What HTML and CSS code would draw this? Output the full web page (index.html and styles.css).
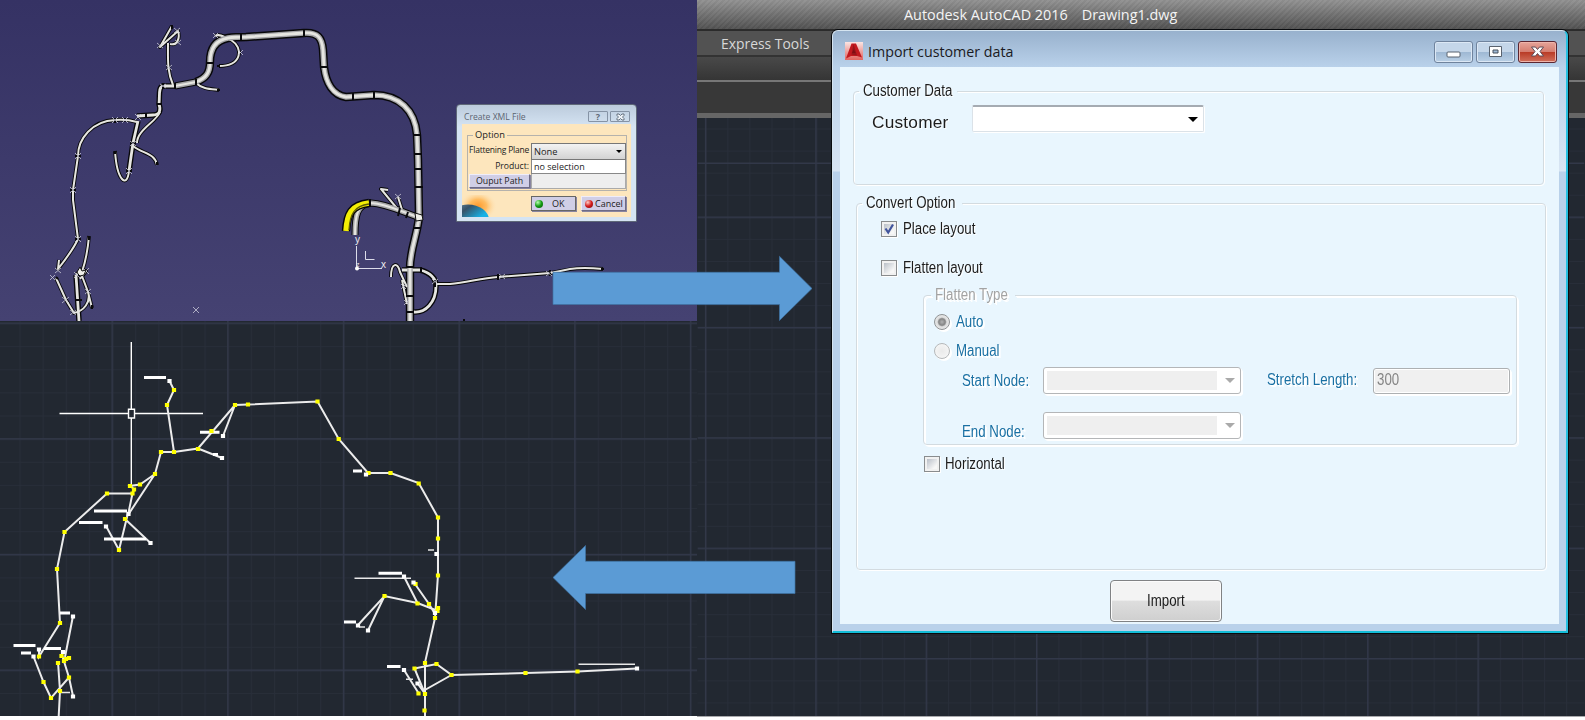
FILE: index.html
```
<!DOCTYPE html>
<html lang="en">
<head>
<meta charset="utf-8">
<title>Import customer data</title>
<link rel="stylesheet" href="styles.css">
</head>
<body>
<div class="stage">
  <div class="left">
    <section class="catia">
      <svg class="scene" width="697" height="321" viewBox="0 0 697 321">
        <defs>
          <g id="thick">
            <path d="M196 82C206 78 210 73 210 62C210 47 217 40 228 38C235 37 240 37 246 37L304 33C318 32 322 38 323 50L324 67C326 83 333 95 346 97L374 95C399 95 415 110 417 135L418 160L419 217C417 236 410 250 410 268L410 324"/>
          </g>
          <g id="medium">
            <path d="M175 86L196 82M418 217C404 213 388 204 371 203C357 204 355 216 355 235"/>
          </g>
          <g id="thin">
            <path d="M175 86L163 86C158 87 160 96 159 104C161 110 160 115 153 115L137 116M138 121L133 143L129 171"/>
            <path d="M76 275L79 321M402 270L420 270C431 273 436 279 436 286C436 303 425 313 414 312"/>
          </g>
          <g id="fine">
            <path d="M173 85C167 71 168 60 168 43M172 26L160 47L178 31C180 37 178 46 170 44M215 36C220 33 226 38 231 40C244 48 242 66 219 66M196 83C202 89 211 89 219 90"/>
            <path d="M137 122C130 120 124 119 115 120C92 121 78 139 78 156L73 190L73 200L78 239C73 250 65 260 58 269L59 260"/>
            <path d="M129 171C127 189 117 181 115 151M133 146C143 154 155 153 157 165M160 112C156 122 137 130 137 143"/>
            <path d="M56 278L66 300L74 313C84 311 91 302 88 292L82 276M89 236C88 248 86 260 82 272M88 292L92 308M76 275L80 271L86 271L80 279"/>
            <path d="M400 212L381 189L388 190M403 213L398 197M391 277C391 262 398 262 400 272L407 287M402 280L407 304M435 284L450 284C467 283 480 278 498 277L550 273C566 271 570 266 603 269"/>
          </g>
        </defs>
        <use href="#fine" class="ink w4"/><use href="#thin" class="ink w6"/><use href="#medium" class="ink w7"/><use href="#thick" class="ink w9"/>
        <use href="#fine" class="pale w2"/><use href="#thin" class="pale w3"/><use href="#medium" class="metal w5"/><use href="#thick" class="metal w6"/>
        <use href="#medium" class="pale w2"/><use href="#thick" class="pale w3"/>
        <path class="ink w9" d="M369 203C351 205 347 214 346 231"/>
        <path class="yellow" d="M369 203C351 205 347 214 346 231"/>
        <path class="yellow-shade" d="M369 204C354 206 350 214 349 230"/>
        <path class="joint" d="M241 34V41M304 30V37M320 67H328M206 63H213M353 93V100M374 92V99M413 135H421M414 154H422M414 169H422M415 187H423M415 217H423M413 228H421M406 267H414M406 296H414M406 312H414M370 199V207M400 208L398 216M408 212L406 218M175 83V89M163 83V89M196 79V85M75 156H81M70 190H76M75 239H81M157 104H162M130 143H136M126 171H132M76 300H82M146 113V118M115 118V123M498 274V280M550 270V276M421 267V273M435 280V287M220 66H217M217 90H220M157 162V165M115 151V154M89 236V240M92 305V309M56 277L58 279M601 269H604M172 25V29M464 319V321"/>
        <path class="cross" d="M193 307l6 6m0-6l-6 6M50 275l5 5m0-5l-5 5M157 43l6 5m0-5l-6 5M174 28l6 5m0-5l-6 5M175 40l6 5m0-5l-6 5M166 65l6 5m0-5l-6 5M213 33l5 5m0-5l-5 5M238 50l5 5m0-5l-5 5M112 117l6 6m0-6l-6 6M122 117l6 6m0-6l-6 6M135 114l6 6m0-6l-6 6M75 153l6 6m0-6l-6 6M70 187l6 6m0-6l-6 6M75 236l6 6m0-6l-6 6M55 268l6 5m0-5l-6 5M62 297l7 6m0-6l-7 6M70 310l6 5m0-5l-6 5M74 272l6 6m0-6l-6 6M83 268l6 6m0-6l-6 6M85 289l6 5m0-5l-6 5M126 168l6 6m0-6l-6 6M130 141l6 5m0-5l-6 5M499 274l6 5m0-5l-6 5M546 271l6 5m0-5l-6 5M160 84l6 4m0-4l-6 4M395 194l6 5m0-5l-6 5M432 279l6 5m0-5l-6 5M401 284l5 5m0-5l-5 5M404 300l5 5m0-5l-5 5"/>
        <path class="blob" d="M77 272l3-5 2 4 4-1-2 5-4 1-2-2zM415 213l7 2 1 5-7 1z"/>
        <path class="axis" d="M356.500 246V268.500H382M365.500 251V259.500H374.500"/>
        <circle cx="357" cy="268.500" r="2" fill="#fff"/>
        <text class="axis-label" x="355" y="243">y</text><text class="axis-label" x="381" y="268">x</text><text class="axis-label small" x="356" y="267">z</text>
      </svg>
      <div class="xml-window">
        <header class="xml-title"><span>Create XML File</span><i class="mini">?</i><i class="mini"><svg width="9" height="8" viewBox="0 0 9 8"><path d="M1 1h2l1.500 1.500L6 1h2v1.500L6.500 4 8 5.500V7H6L4.500 5.500 3 7H1V5.500L2.500 4 1 2.500z" fill="#eef3f8" stroke="#65717e"/></svg></i></header>
        <div class="xml-body">
          <fieldset class="xml-group">
            <legend>Option</legend>
            <div class="xml-grid">
              <label>Flattening Plane</label><div class="xml-combo"><span>None</span><b class="arrow"></b></div>
              <label>Product:</label><div class="xml-input">no selection</div>
              <button class="xml-path">Ouput Path</button><div class="xml-input off"></div>
            </div>
          </fieldset>
          <div class="xml-foot"><svg class="planet" width="36" height="22" viewBox="0 0 36 22">
            <defs><radialGradient id="glow"><stop offset="0" stop-color="#ff9a2c"/><stop offset=".45" stop-color="#ffbd63"/><stop offset="1" stop-color="#fde6bd" stop-opacity="0"/></radialGradient><linearGradient id="ball" x2="1" y2="1"><stop offset="0" stop-color="#7fa4bb"/><stop offset=".3" stop-color="#365268"/><stop offset=".6" stop-color="#17b1e6"/></linearGradient></defs>
            <ellipse cx="16" cy="11" rx="19" ry="15" fill="url(#glow)"/><ellipse cx="6" cy="25" rx="21" ry="15.500" fill="url(#ball)"/></svg>
            <button class="xml-btn ok"><i class="dot green"></i><span>OK</span></button><button class="xml-btn"><i class="dot red"></i><span>Cancel</span></button></div>
        </div>
      </div>
    </section>
    <section class="cad-left">
      <svg class="scene" width="697" height="395" viewBox="0 321 697 395">
        <defs>
          <pattern id="minorL" x="19.500" y="323" width="23.130" height="23.130" patternUnits="userSpaceOnUse"><path d="M0 .5H23.130M.5 0V23.130" class="grid-minor"/></pattern>
          <pattern id="majorL" x="111.500" y="322.500" width="115.670" height="115.670" patternUnits="userSpaceOnUse"><path d="M0 .7H115.670M.7 0V115.670" class="grid-major"/></pattern>
        </defs>
        <rect y="321" width="697" height="396" fill="url(#minorL)"/><rect y="321" width="697" height="396" fill="url(#majorL)"/>
        <path class="cursor" d="M131.300 342V409M131.300 418V486M59.500 413.500H128M135 413.500H203M128.500 409.300H134.500V418H128.500Z"/>
        <path class="wire" d="M169.500 381L174 390L167 405L174 452L161 452L155 474L140 484.500L130 486L134 489L132.500 493.500L107 493.500L64.500 532L57 569L60 623L39 656.500L39 649M174 452L198 448.500L235 405L248 404.500L317.500 401.500L338.700 439L368 473L390.500 473L418.700 483L438 517.500L438 575L435 618L425 662.500V720M235 405L223 436M198 448.500L222 458M155 474L128 515L132.500 493.500M128 513L119 550L106 526M125 519L150.500 543"/>
        <path class="wire" d="M73 616L65 657M33.500 656.500L43.500 682L51 698L69 677.500L62 655L63 651M69 677.500L73 696M58 662L60 691L58.500 720"/>
        <path class="wire" d="M438 611L417.500 603L384.500 596L358 625M384.500 596L368 630.500M404 576.500L417.500 603M415 584L429 604L435 614M425 694L414.500 668.500L436.500 664L451.500 675L423 691L418 684M451.500 675L525.500 673L577.500 671.500L637 668.500M404 670L418.500 693"/>
        <path class="callout" d="M144 377.500H166M200 432.300H219.500M213 454.500H218M94 511H127M79 522.500H102.500M104 539H146M60 613H70M13.500 645.500H35.500M44 648.500H61M21 653H31M353 471H362M378.500 573.300H402M344 622H356M387 666.500H400.500"/>
        <path class="hairline" d="M354.500 578.300H411M428 550H434M578.500 664.300H635M406 679.300H413M359 627H365M61 692.500H70"/>
        <path class="node" d="M174 390h0M167 405h0M174 452h0M161 452h0M155 474h0M140 484.500h0M130 486h0M134 489.500h0M132.500 493.500h0M107 493.500h0M64.500 532h0M57 569h0M60 623h0M39 656.500h0M198 449h0M211.500 431h0M235 405h0M248 404.500h0M317.500 401.500h0M338.700 439h0M368.500 473h0M390.500 473h0M418.700 483.500h0M438 517.500h0M438 538.500h0M438 575.500h0M438 608h0M437.500 611h0M435 618h0M125 519h0M119 550h0M43.500 682h0M51 698h0M69 677.500h0M60 691h0M58 663h0M61.500 656h0M64 661h0M69 658h0M66 659h0M384.500 596h0M417.500 603.500h0M429 604h0M415.500 584h0M425 663h0M414.500 668.500h0M436.500 664h0M451.500 675h0M525.500 673h0M577.500 671.500h0M418.500 693.500h0M425 694h0M424.500 710.500h0"/>
        <path class="end" d="M169.500 381h0M223 436h0M222 458h0M128.500 514h0M106 526.500h0M150.500 543h0M73 616.500h0M39 649.500h0M33.500 656.500h0M63 652h0M73 696.500h0M366 474.500h0M436.500 554h0M404 576.500h0M413.500 582.500h0M358 625.500h0M368 630.500h0M404 670h0M417.500 683.500h0M637 668.500h0M435 613h0"/>
      </svg>
    </section>
  </div>
  <div class="right">
    <header class="app-title"><span>Autodesk AutoCAD 2016</span><span>Drawing1.dwg</span></header>
    <nav class="tabs"><span>Express Tools</span></nav>
    <div class="ribbon"></div><div class="panel"></div>
    <svg class="scene sheet" width="888" height="599" viewBox="697 118 888 599">
      <defs>
        <pattern id="minorR" x="704.500" y="217" width="22.110" height="22.110" patternUnits="userSpaceOnUse"><path d="M0 .5H22.110M.5 0V22.110" class="grid-minor"/></pattern>
        <pattern id="majorR" x="704.200" y="216.700" width="110.550" height="110.550" patternUnits="userSpaceOnUse"><path d="M0 .7H110.550M.7 0V110.550" class="grid-major"/></pattern>
      </defs>
      <rect x="697" y="118" width="888" height="599" fill="url(#minorR)"/><rect x="697" y="118" width="888" height="599" fill="url(#majorR)"/>
      <path class="grid-major" d="M697 163.300H1585"/>
    </svg>
  </div>

  <svg class="arrows" width="270" height="360" viewBox="552 250 270 360">
    <path d="M553 272.300H779.500V256.300L812 288.500L779.500 320.500V304.500H553Z"/><path d="M553 577.500L585.500 545.500V561.300H795V593.500H585.500V609.500Z"/>
  </svg>

  <div class="dialog">
    <header class="dlg-title">
      <svg class="logo" width="18" height="18" viewBox="0 0 18 18"><defs><linearGradient id="lg" x2="0" y2="1"><stop offset="0" stop-color="#fbe5e3"/><stop offset="1" stop-color="#e2645f"/></linearGradient></defs><rect width="18" height="18" fill="url(#lg)"/><path d="M6.500 1.500H11L17 15.500L12 14L6 14L1 16.500Z" fill="#c1181e"/><path d="M8.500 2L12 13.500L6.500 12.500Z" fill="#96151a"/><path d="M8.800 7.500L10.500 11H7Z" fill="#7f0d13"/></svg>
      <span class="dlg-name">Import customer data</span>
      <div class="win-buttons">
        <i class="wb"><svg width="37" height="19" viewBox="0 0 37 19"><rect x="12" y="10" width="13" height="5" rx="1" fill="#fff" stroke="#59626e"/></svg></i>
        <i class="wb"><svg width="37" height="19" viewBox="0 0 37 19"><path d="M12.500 4.500h12v10h-12z" fill="#fff" stroke="#59626e"/><path d="M16 8h5v3h-5z" fill="#9eb9d6" stroke="#46505c"/></svg></i>
        <i class="wb close"><svg width="37" height="19" viewBox="0 0 37 19"><path d="M12.500 5h4l2 2.500 2-2.500h4l-3.500 4.500L24.500 14h-4l-2-2.500-2 2.500h-4l3.500-4.500z" fill="#fff" stroke="#5e4a55"/></svg></i>
      </div>
    </header>
    <div class="dlg-body">
      <fieldset class="group customer">
        <legend class="l-customer"><span class="t">Customer Data</span></legend>
        <div class="customer-row"><label class="big">Customer</label><div class="combo"><b class="arrow"></b></div></div>
      </fieldset>
      <fieldset class="group convert">
        <legend class="l-convert"><span class="t">Convert Option</span></legend>
        <div class="check first"><i class="box"><svg width="14" height="14" viewBox="0 0 14 14"><path d="M3.500 6.500L6.200 10.500L11 2.500" fill="none" stroke="#41549c" stroke-width="2.200"/></svg></i><span class="t">Place layout</span></div>
        <div class="check second"><i class="box"></i><span class="t">Flatten layout</span></div>
        <fieldset class="group flatten">
          <legend class="l-flatten"><span class="t">Flatten Type</span></legend>
          <div class="radio auto"><i class="ring on"></i><span class="t">Auto</span></div>
          <div class="radio manual"><i class="ring"></i><span class="t">Manual</span></div>
          <div class="node-row start"><label><span class="t">Start Node:</span></label><div class="select"><i></i><b class="arrow"></b></div><label class="stretch"><span class="t">Stretch Length:</span></label><div class="number"><span class="t">300</span></div></div>
          <div class="node-row finish"><label><span class="t">End Node:</span></label><div class="select"><i></i><b class="arrow"></b></div></div>
        </fieldset>
        <div class="check third"><i class="box"></i><span class="t">Horizontal</span></div>
      </fieldset>
      <button class="import"><span class="t">Import</span></button>
    </div>
  </div>
</div>
</body>
</html>
```
FILE: styles.css
```
* { box-sizing: border-box; }
body { margin: 0; background: #fff; overflow: hidden; font-family: "Liberation Sans", Arial, sans-serif; }
i { font-style: normal; }
button { font: inherit; color: inherit; }
.stage { position: relative; display: flex; width: 1585px; height: 717px; overflow: hidden; }
.scene { display: block; }

/* left column */
.left { width: 697px; }
.catia { position: relative; height: 321px; background: linear-gradient(#353264, #454272); }
.cad-left { height: 395px; background: #222831; }
.catia .scene path, .catia .scene use { fill: none; stroke-linejoin: round; }
.ink { stroke: #08080a; }
.metal { stroke: #a5a5a7; }
.pale { stroke: #e6e6e1; }
.w2 { stroke-width: 2; } .w3 { stroke-width: 2.8; } .w4 { stroke-width: 3.8; } .w5 { stroke-width: 5; }
.w6 { stroke-width: 5.5; } .w7 { stroke-width: 7; } .w9 { stroke-width: 8.4; }
.yellow { stroke: #f4ef05; stroke-width: 5.5; }
.yellow-shade { stroke: #5c5a06; stroke-width: 1.3; }
.joint { stroke: #0a0a0c; stroke-width: 2; }
.cross { stroke: #c9c9d8; stroke-width: .8; }
.catia .scene .blob { fill: #f0f0ea; stroke: #111; stroke-width: 1; }
.axis { stroke: #dcdcea; stroke-width: 1; }
.axis-label { fill: #eee; font-size: 10px; }
.axis-label.small { font-size: 7px; }

.grid-minor { stroke: #282e39; stroke-width: 1; fill: none; }
.grid-major { stroke: #323849; stroke-width: 1.4; fill: none; }
.cursor { fill: none; stroke: #fff; stroke-width: 1.4; }
.wire { fill: none; stroke: #ececec; stroke-width: 2; }
.callout { stroke: #fff; stroke-width: 3; }
.hairline { stroke: #e8e8e8; stroke-width: 1.6; }
.node { stroke: #ff0; }
.end { stroke: #fff; }
.node, .end { stroke-linecap: square; stroke-width: 4.2; }

/* small window */
.xml-window { position: absolute; left: 456px; top: 104px; width: 181px; height: 118px; padding: 0 5px 5px; border: 1px solid #5f6878; border-radius: 4px 4px 0 0; background: linear-gradient(#bccbdc, #d5e4f3 22px, #d5e4f3); font: 9.300px "Open Sans", "Noto Sans", sans-serif; color: #222; }
.xml-title { display: flex; align-items: center; gap: 2px; height: 19px; padding: 4px 1px 0 2px; color: #5b6470; font-size: 8.600px; }
.xml-title span { flex: 1; white-space: nowrap; }
.mini { display: flex; align-items: center; justify-content: center; width: 20px; height: 11px; border: 1px solid #8593a5; border-radius: 1px; color: #5e6976; font-weight: bold; font-size: 9px; line-height: 9px; }
.xml-body { height: 93px; padding: 5px 5px 0; background: #fde6bd; }
.xml-group { height: 62px; margin: 0; padding: 0; border: 1px solid #b5b2ac; width: 160px; min-width: 0; }
.xml-group legend { margin-left: 5px; padding: 0 2px; line-height: 12px; }
.xml-grid { display: grid; grid-template-columns: 63px 95px; grid-template-rows: 17px 14px 15px; margin-top: 2px; }
.xml-grid label { padding: 1px 2px 0 0; text-align: right; white-space: nowrap; font-size: 8.600px; line-height: 11px; }
.xml-grid label:first-child { letter-spacing: -.22px; font-size: 8.500px; }
.xml-combo { display: flex; align-items: center; justify-content: space-between; padding: 0 3px 0 2px; border: 1px solid #777; background: linear-gradient(#f3f3f3, #d3d3d3); }
.arrow { width: 0; height: 0; border: 3px solid transparent; border-top: 3px solid #000; border-bottom: 0; }
.xml-input { padding-left: 2px; border: 1px solid #888; border-top: 0; background: #fff; line-height: 13px; font-size: 9px; }
.xml-input.off { background: #eee; border-color: #aaa; }
.xml-path, .xml-btn { padding: 0; background: #d0cee6; border: 1px solid; border-color: #efedf9 #6e6b86 #6e6b86 #efedf9; line-height: 11px; box-shadow: 1px 1px 0 #8885a0; }
.xml-path { margin: 0 1px 1px 1px; font-size: 8.800px; }
.xml-foot { display: flex; height: 26px; margin: 0 0 0 -5px; padding: 5px 0 0; gap: 5px; }
.planet { flex: none; align-self: flex-end; margin-right: 28px; overflow: hidden; }
.xml-btn { display: flex; flex: none; align-items: center; width: 45px; height: 15px; padding: 0 2px 0 3px; gap: 2px; font-size: 9px; }
.xml-btn.ok { gap: 9px; border-color: #666; }
.dot { flex: none; width: 8px; height: 8px; border-radius: 50%; background: radial-gradient(circle at 35% 30%, #b9ffb0, #139c13 50%, #075007); }
.dot.red { background: radial-gradient(circle at 35% 30%, #ffd0c8, #d31a1a 50%, #701010); }

/* right column */
.right { width: 888px; background: #222831; }
.sheet { height: 599px; border-bottom: 1px solid #a9aaad; }
.app-title { display: flex; gap: 16px; height: 31px; padding: 5px 0 0 207px; border-bottom: 2px solid #2b2b2b; background: repeating-linear-gradient(135deg, #ffffff08 0 2px, #00000008 2px 4px), linear-gradient(#929292, #525252); color: #f4f4f4; font: 14.400px/20px "Open Sans", sans-serif; }
.app-title span { white-space: nowrap; }
.app-title span + span { margin-left: -2px; }
.tabs { height: 26px; padding: 3px 0 0 24px; border-bottom: 2px solid #333; background: #525252; color: #d8d8d8; font: 13.900px/19px "Open Sans", sans-serif; }
.ribbon { height: 25px; background: linear-gradient(#494949, #353535); border-bottom: 2px solid #777; }
.panel { height: 36px; background: #383838; border-bottom: 5px solid #666; }
.arrows { position: absolute; left: 552px; top: 250px; fill: #5b9bd5; stroke: #3f73a3; stroke-width: .7; }

/* import dialog */
.dialog { position: absolute; left: 832px; top: 30px; width: 736px; height: 603px; padding: 0 7px; border: 1px solid #d5e4f0; border-right: 2px solid #27c0e0; border-bottom: 2px solid #13bdd8; border-radius: 6px 6px 0 0; background: linear-gradient(#98b1cd, #b9d1ea 36px, #d8e5f3 140px, #b9d1ea 141px); box-shadow: 0 0 0 1px #090b0e; }
.dlg-title { display: flex; height: 36px; padding: 11px 2px 0 6px; }
.dlg-name { margin: -1px 0 0 4px; color: #1a1a22; font: 14.250px/22px "Open Sans", sans-serif; white-space: nowrap; }
.logo { margin-left: -1px; margin-right: 1px; }
.win-buttons { display: flex; gap: 3px; margin: -1px 0 0 auto; }
.wb { width: 39px; height: 22px; border: 1px solid #6f839d; border-radius: 3px; background: linear-gradient(#c4d6e9 48%, #9db7d3 50%, #bad0e6); box-shadow: inset 0 0 0 1px #dce8f5; }
.wb.close { border-color: #5b2631; background: linear-gradient(#e6a49a, #d57e70 48%, #b83a25 50%, #d1705c); box-shadow: inset 0 0 0 1px #eeb4aa; }
.dlg-body { display: flex; flex-direction: column; height: 557px; padding: 14px 13px 0; background: #e9f6fe; color: #1c1c1c; font-size: 16px; line-height: 20px; }
.t { display: inline-block; white-space: nowrap; transform: scaleX(.83); transform-origin: 0 50%; }
.group { flex: none; min-width: 0; margin: 0; padding: 0; border: 1px solid #d3dbe0; border-radius: 4px; filter: drop-shadow(1px 1px 0 #fff); }
.group legend { height: 20px; padding: 0 0 0 4px; margin-left: 5px; white-space: nowrap; }
.l-customer { width: 98px; } .l-convert { width: 100px; }
.group .l-flatten { width: 84px; margin-left: 7px; color: #a3a3a3; }
.customer { width: 691px; height: 104px; }
.customer-row { display: flex; align-items: center; padding: 4px 0 0 18px; }
.big { width: 100px; padding-top: 7px; font-size: 17.300px; letter-spacing: .2px; }
.combo { display: flex; align-items: center; justify-content: flex-end; width: 232px; height: 27px; padding-right: 5px; border: 1px solid #dbe2e8; border-top: 2px solid #a5abb2; border-radius: 2px; background: #fff; }
.combo .arrow, .select .arrow { border-width: 5px 5px 0; }
.convert { width: 690px; height: 377px; margin: 8px 0 0 3px; }
.check { display: flex; gap: 6px; height: 16px; line-height: 15px; padding-left: 24px; }
.first { margin-top: 8px; } .second { margin-top: 23px; } .third { margin-top: 11px; padding-left: 67px; gap: 5px; }
.box { width: 16px; height: 16px; border: 1px solid #898c8e; background: linear-gradient(135deg, #b9bfc8, #f7f7f7 80%) content-box, #f1f1f1; padding: 2px; }
.box svg { display: block; margin: -2px; }
.flatten { width: 594px; height: 160px; margin: 9px 0 0 66px; }
.radio, .node-row { display: flex; color: #1a70a3; }
.radio { gap: 6px; height: 16px; line-height: 16px; padding-left: 10px; }
.auto { margin-top: 9px; } .manual { margin-top: 13px; }
.ring { width: 16px; height: 16px; border: 1px solid #b4b7b9; border-radius: 50%; background: radial-gradient(#eaeaea, #f4f4f4 70%); }
.ring.on { border-color: #8f9294; background: radial-gradient(circle, #b2b2b2 0, #838383 33%, #ddd 48%, #f4f4f4); }
.node-row { align-items: center; height: 27px; padding-left: 38px; }
.node-row label { width: 81px; }
.start { margin-top: 8px; } .finish { margin-top: 18px; }
.finish label { padding-top: 12px; }
.select { display: flex; align-items: center; justify-content: space-between; width: 198px; height: 27px; padding: 3px 5px 3px 3px; border: 1px solid #b4b6b8; border-radius: 3px; background: #fff; }
.select i { width: 170px; height: 19px; background: #efefef; }
.select .arrow { border-top-color: #aaa; }
.node-row .stretch { width: 106px; margin-left: 26px; margin-top: -2px; }
.number { width: 137px; height: 26px; padding: 1px 3px; border: 1px solid #adb0b2; border-radius: 3px; background: #f0f0f0; color: #858585; box-shadow: inset 0 0 0 1px #fff; }
.import { width: 112px; height: 42px; margin: 10px 0 0 257px; padding: 0 0 0 7px; border: 1px solid #808284; border-radius: 4px; background: linear-gradient(#f3f3f3 48%, #dedede 50%, #cfcfcf); box-shadow: inset 0 0 0 1px #fbfbfb; }
```
